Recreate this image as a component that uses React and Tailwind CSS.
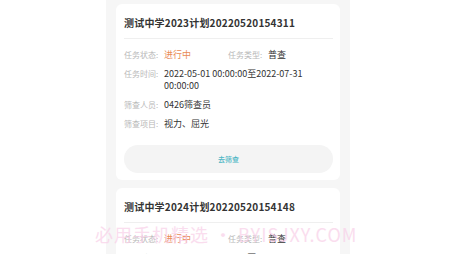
const FONT = { fontFamily: '"Noto Sans CJK SC", "Noto Sans", sans-serif' }

const tasks = [
  {
    title: '测试中学2023计划20220520154311',
    status: '进行中',
    type: '普查',
    time: '2022-05-01 00:00:00至2022-07-31 00:00:00',
    staff: '0426筛查员',
    items: '视力、屈光',
  },
  {
    title: '测试中学2024计划20220520154148',
    status: '进行中',
    type: '普查',
    time: '2022-05-01 00:00:00至2022-07-31 00:00:00',
    staff: '0426筛查员',
    items: '视力、屈光',
  },
]

function Field({ label, children, valueClass = 'text-[#333333]' }) {
  return (
    <div className="flex items-start leading-[12px]">
      <span className="w-[40px] shrink-0 text-[8px] text-[#b8b8b8]">{label}:</span>
      <span className={`text-[9px] ${valueClass}`}>{children}</span>
    </div>
  )
}

function TaskCard({ t }) {
  return (
    <div className="bg-white rounded-[6px] pl-[8px] pr-[7px] pt-[12px] pb-[7px]">
      <h2 className="text-[10px] leading-[14px] font-bold text-[#333333] tracking-[0.2px]">{t.title}</h2>
      <div className="h-px bg-[#efefef] mt-[8px] mb-[10px]" />
      <div className="flex flex-col gap-[7px]">
        <div className="flex">
          <div className="w-[104px]">
            <Field label="任务状态" valueClass="text-[#e98a55]">{t.status}</Field>
          </div>
          <Field label="任务类型">{t.type}</Field>
        </div>
        <Field label="任务时间">
          <span className="block w-[145px]">{t.time}</span>
        </Field>
        <Field label="筛查人员">{t.staff}</Field>
        <Field label="筛查项目">{t.items}</Field>
      </div>
      <button className="mt-[15px] w-full h-[28px] rounded-full bg-[#f4f4f4] text-[7px] text-[#4cb6c4] font-medium">
        去筛查
      </button>
    </div>
  )
}

export default function App() {
  return (
    <div className="relative w-[451px] h-[254px] overflow-hidden bg-white" style={FONT}>
      <div className="ml-[106px] w-[244px] h-full bg-[#f6f6f6] px-[10px] pt-[4px] flex flex-col gap-[8px]">
        {tasks.map(t => <TaskCard key={t.title} t={t} />)}
      </div>
      <div className="absolute left-[95px] top-[223px] text-[18px] leading-[22px] text-[#f9cfe8] opacity-70 whitespace-nowrap tracking-[1px] pointer-events-none">
        必用手机精选 · BYISJXY.COM
      </div>
    </div>
  )
}
